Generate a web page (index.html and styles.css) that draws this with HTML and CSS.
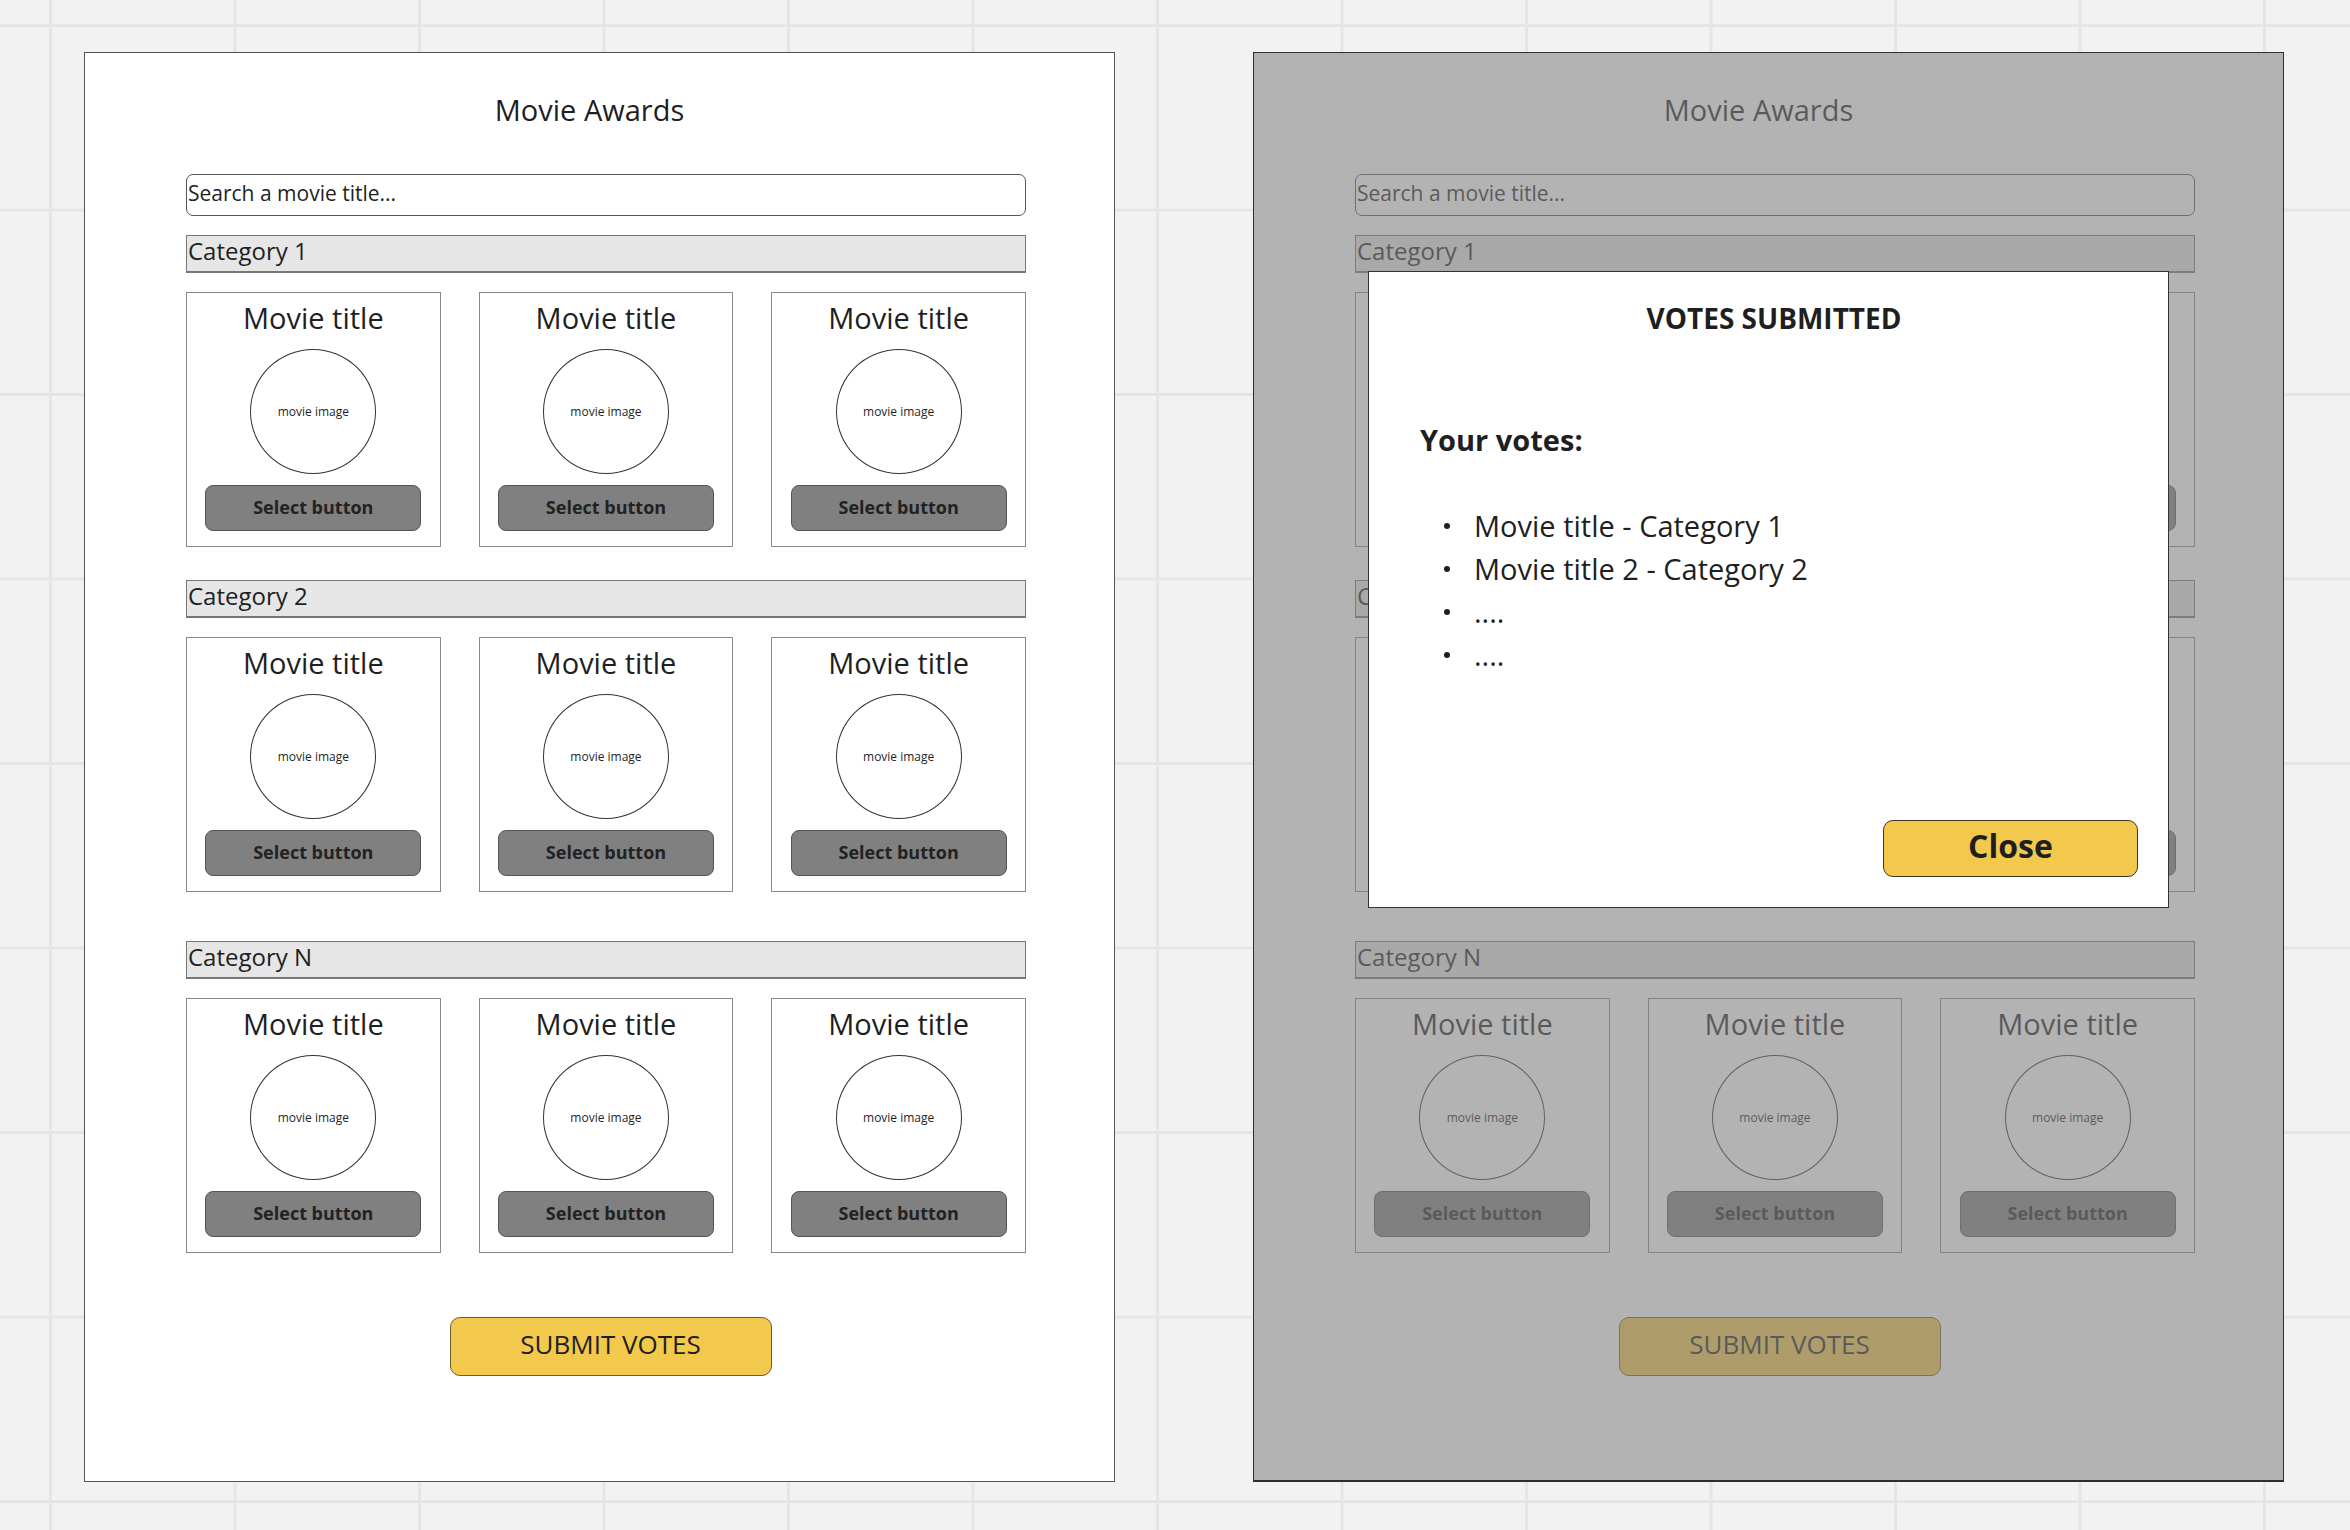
FILE: index.html
```html
<!DOCTYPE html>
<html lang="en">
<head>
  <meta charset="UTF-8">
  <title>Movie Awards - wireframes</title>
  <link rel="stylesheet" href="styles.css">
</head>
<body>
  <div class="board">
    <!-- voting screen -->
    <section class="screen">
      <h1 class="title">Movie Awards</h1>
      <div class="search">Search a movie title...</div>

      <div class="group group-first">
        <div class="category">Category 1</div>
        <div class="cards">
          <div class="card"><div class="card-title">Movie title</div><div class="poster">movie image</div><button class="select-btn">Select button</button></div>
          <div class="card"><div class="card-title">Movie title</div><div class="poster">movie image</div><button class="select-btn">Select button</button></div>
          <div class="card"><div class="card-title">Movie title</div><div class="poster">movie image</div><button class="select-btn">Select button</button></div>
        </div>
      </div>

      <div class="group group-second">
        <div class="category">Category 2</div>
        <div class="cards">
          <div class="card"><div class="card-title">Movie title</div><div class="poster">movie image</div><button class="select-btn">Select button</button></div>
          <div class="card"><div class="card-title">Movie title</div><div class="poster">movie image</div><button class="select-btn">Select button</button></div>
          <div class="card"><div class="card-title">Movie title</div><div class="poster">movie image</div><button class="select-btn">Select button</button></div>
        </div>
      </div>

      <div class="group group-last">
        <div class="category">Category N</div>
        <div class="cards">
          <div class="card"><div class="card-title">Movie title</div><div class="poster">movie image</div><button class="select-btn">Select button</button></div>
          <div class="card"><div class="card-title">Movie title</div><div class="poster">movie image</div><button class="select-btn">Select button</button></div>
          <div class="card"><div class="card-title">Movie title</div><div class="poster">movie image</div><button class="select-btn">Select button</button></div>
        </div>
      </div>

      <div class="submit-row"><button class="submit">SUBMIT VOTES</button></div>
    </section>

    <!-- same screen with the confirmation popup -->
    <section class="screen screen-dimmed">
      <h1 class="title">Movie Awards</h1>
      <div class="search">Search a movie title...</div>

      <div class="group group-first">
        <div class="category">Category 1</div>
        <div class="cards">
          <div class="card"><div class="card-title">Movie title</div><div class="poster">movie image</div><button class="select-btn">Select button</button></div>
          <div class="card"><div class="card-title">Movie title</div><div class="poster">movie image</div><button class="select-btn">Select button</button></div>
          <div class="card"><div class="card-title">Movie title</div><div class="poster">movie image</div><button class="select-btn">Select button</button></div>
        </div>
      </div>

      <div class="group group-second">
        <div class="category">Category 2</div>
        <div class="cards">
          <div class="card"><div class="card-title">Movie title</div><div class="poster">movie image</div><button class="select-btn">Select button</button></div>
          <div class="card"><div class="card-title">Movie title</div><div class="poster">movie image</div><button class="select-btn">Select button</button></div>
          <div class="card"><div class="card-title">Movie title</div><div class="poster">movie image</div><button class="select-btn">Select button</button></div>
        </div>
      </div>

      <div class="group group-last">
        <div class="category">Category N</div>
        <div class="cards">
          <div class="card"><div class="card-title">Movie title</div><div class="poster">movie image</div><button class="select-btn">Select button</button></div>
          <div class="card"><div class="card-title">Movie title</div><div class="poster">movie image</div><button class="select-btn">Select button</button></div>
          <div class="card"><div class="card-title">Movie title</div><div class="poster">movie image</div><button class="select-btn">Select button</button></div>
        </div>
      </div>

      <div class="submit-row"><button class="submit">SUBMIT VOTES</button></div>

      <div class="overlay"></div>
      <div class="modal">
        <h2 class="modal-title">VOTES SUBMITTED</h2>
        <p class="votes-heading">Your votes:</p>
        <ul class="votes">
          <li>Movie title - Category 1</li>
          <li>Movie title 2 - Category 2</li>
          <li>....</li>
          <li>....</li>
        </ul>
        <div class="close-row"><button class="close">Close</button></div>
      </div>
    </section>
  </div>
</body>
</html>
```

FILE: styles.css
```css
* {
  box-sizing: border-box;
}

html, body {
  margin: 0;
  height: 1530px;
  overflow: hidden;
}

body {
  font-family: "Open Sans", "Liberation Sans", sans-serif;
  color: #1f1f1f;
  background-color: #f2f2f2;
  background-image:
    linear-gradient(to right, #e5e5e5 3px, transparent 3px),
    linear-gradient(to bottom, #e5e5e5 3px, transparent 3px);
  background-size: 184.5px 184.5px;
  background-position: 49px 24px;
}

button {
  font-family: inherit;
  color: #1f1f1f;
  padding: 0;
  cursor: pointer;
}

.board {
  display: flex;
  gap: 138px;
  padding: 52px 0 0 84px;
}

.screen {
  position: relative;
  width: 1031px;
  height: 1430px;
  background: #fff;
  border: 1px solid #555;
  padding: 37px 88px 0 101px;
}

.screen-dimmed {
  border-color: #2e2e2e;
  border-bottom-width: 2px;
}

.title {
  margin: 0;
  font-size: 29px;
  font-weight: 400;
  line-height: 40px;
  text-align: center;
  padding-right: 33px;
}

.search {
  margin-top: 44px;
  height: 42px;
  border: 1px solid #555;
  border-radius: 7px;
  font-size: 21px;
  line-height: 37px;
  padding-left: 1px;
}

.group-first { margin-top: 19px; }
.group-second { margin-top: 33px; }
.group-last { margin-top: 49px; }

.category {
  height: 38px;
  background: #e6e6e6;
  border: 1px solid #777;
  border-bottom: 2px solid #777;
  font-size: 24px;
  line-height: 29px;
  padding-left: 1px;
}

.cards {
  margin-top: 19px;
  display: grid;
  grid-template-columns: repeat(3, 1fr);
  gap: 38px;
}

.card {
  height: 255px;
  border: 1px solid #8a8a8a;
  display: flex;
  flex-direction: column;
  align-items: center;
  padding-top: 7px;
}

.card-title {
  font-size: 29px;
  line-height: 36px;
}

.poster {
  margin-top: 13px;
  width: 126px;
  height: 125px;
  border: 1px solid #333;
  border-radius: 50%;
  display: flex;
  align-items: center;
  justify-content: center;
  font-size: 12px;
}

.select-btn {
  margin-top: 11px;
  width: 216px;
  height: 46px;
  background: #808080;
  border: 1px solid #555;
  border-radius: 8px;
  font-size: 18px;
  font-weight: 700;
  color: #222;
  padding-bottom: 3px;
}

.submit-row {
  margin-top: 64px;
  display: flex;
  justify-content: center;
  padding-left: 9px;
}

.submit {
  width: 322px;
  height: 59px;
  background: #f2c94c;
  border: 1px solid #6b5d2e;
  border-radius: 10px;
  font-size: 26px;
  padding-bottom: 6px;
}

.overlay {
  position: absolute;
  top: 0;
  left: 0;
  right: 0;
  bottom: 0;
  background: rgba(128, 128, 128, 0.6);
}

.modal {
  position: absolute;
  top: 218px;
  left: 114px;
  width: 801px;
  height: 637px;
  background: #fff;
  border: 1px solid #333;
  display: flex;
  flex-direction: column;
  padding: 28px 30px 30px 51px;
}

.modal-title {
  margin: 0;
  font-size: 28px;
  font-weight: 700;
  line-height: 36px;
  text-align: center;
  padding-right: 10px;
}

.votes-heading {
  margin: 84px 0 0;
  font-size: 29px;
  font-weight: 700;
  line-height: 40px;
}

.votes {
  list-style: none;
  margin: 44px 0 0;
  padding: 0;
}

.votes li {
  display: flex;
  align-items: center;
  font-size: 29px;
  line-height: 43px;
}

.votes li::before {
  content: "";
  width: 6px;
  height: 6px;
  border-radius: 50%;
  background: #1f1f1f;
  margin: 0 24px;
}

.close-row {
  margin-top: auto;
  display: flex;
  justify-content: flex-end;
}

.close {
  width: 255px;
  height: 57px;
  background: #f2c94c;
  border: 1px solid #3d3520;
  border-radius: 10px;
  font-size: 32px;
  font-weight: 700;
  padding-bottom: 6px;
}
```
